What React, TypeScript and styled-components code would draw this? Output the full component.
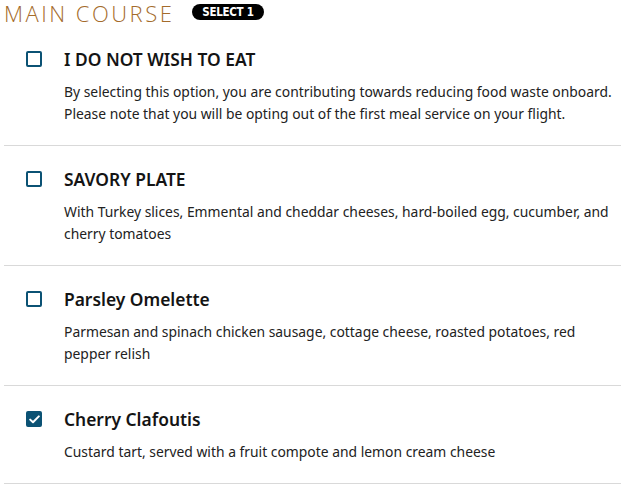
import React, { useState } from "react";
import styled, { createGlobalStyle } from "styled-components";

const Global = createGlobalStyle`
  html, body { margin: 0; padding: 0; background: #ffffff; }
  body { font-family: "Noto Sans", "Open Sans", sans-serif; color: #1b1b1b; }
  * { box-sizing: border-box; }
`;

const Page = styled.div`
  width: 637px;
  padding: 0 16px 0 4px;
`;

const Header = styled.div`
  display: flex;
  align-items: center;
  gap: 18px;
  height: 26px;
`;

const Heading = styled.h2`
  margin: 0;
  font-family: "Open Sans", "Noto Sans", sans-serif;
  font-weight: 300;
  font-size: 22px;
  line-height: 26px;
  letter-spacing: 2.5px;
  color: #a46b2b;
`;

const Badge = styled.span`
  display: inline-flex;
  align-items: center;
  justify-content: center;
  height: 16px;
  line-height: 16px;
  padding: 0 10px;
  border-radius: 8px;
  background: #000;
  color: #fff;
  font-family: "DejaVu Sans Condensed", "DejaVu Sans", sans-serif;
  font-stretch: condensed;
  font-weight: 700;
  font-size: 11.5px;
  letter-spacing: -0.3px;
  margin-top: -2px;
`;

const List = styled.ul`
  list-style: none;
  margin: 0;
  padding: 0;
`;

const Row = styled.li`
  display: flex;
  align-items: flex-start;
  gap: 22px;
  padding: 21px 0 20px 22px;
  border-bottom: 1px solid #d9d9d9;
  cursor: pointer;
`;

const Box = styled.span<{ $checked: boolean }>`
  flex: none;
  width: 16px;
  height: 16px;
  margin-top: 4px;
  border: 2px solid #0b5274;
  border-radius: 2px;
  background: ${(p) => (p.$checked ? "#0b5274" : "#fff")};
  display: flex;
  align-items: center;
  justify-content: center;
`;

const Content = styled.div`
  display: flex;
  flex-direction: column;
  gap: 10px;
`;

const Title = styled.div`
  font-size: 17.4px;
  line-height: 24px;
  font-weight: 600;
  color: #141414;
`;

const Desc = styled.p`
  margin: 0;
  font-size: 13.88px;
  line-height: 22px;
  color: #222;
`;

const items = [
  {
    title: "I DO NOT WISH TO EAT",
    desc: "By selecting this option, you are contributing towards reducing food waste onboard. Please note that you will be opting out of the first meal service on your flight.",
  },
  {
    title: "SAVORY PLATE",
    desc: "With Turkey slices, Emmental and cheddar cheeses, hard-boiled egg, cucumber, and cherry tomatoes",
  },
  {
    title: "Parsley Omelette",
    desc: "Parmesan and spinach chicken sausage, cottage cheese, roasted potatoes, red pepper relish",
  },
  {
    title: "Cherry Clafoutis",
    desc: "Custard tart, served with a fruit compote and lemon cream cheese",
  },
];

export default function App() {
  const [sel, setSel] = useState(3);
  return (
    <Page>
      <Global />
      <Header>
        <Heading>MAIN COURSE</Heading>
        <Badge>SELECT 1</Badge>
      </Header>
      <List>
        {items.map((it, i) => (
          <Row key={it.title} onClick={() => setSel(i)}>
            <Box $checked={sel === i}>
              {sel === i && (
                <svg width="11" height="9" viewBox="0 0 11 9">
                  <path d="M1.2 4.6 L4 7.3 L9.8 1.4" fill="none" stroke="#fff" strokeWidth="2" strokeLinecap="round" strokeLinejoin="round" />
                </svg>
              )}
            </Box>
            <Content>
              <Title>{it.title}</Title>
              <Desc>{it.desc}</Desc>
            </Content>
          </Row>
        ))}
      </List>
    </Page>
  );
}
